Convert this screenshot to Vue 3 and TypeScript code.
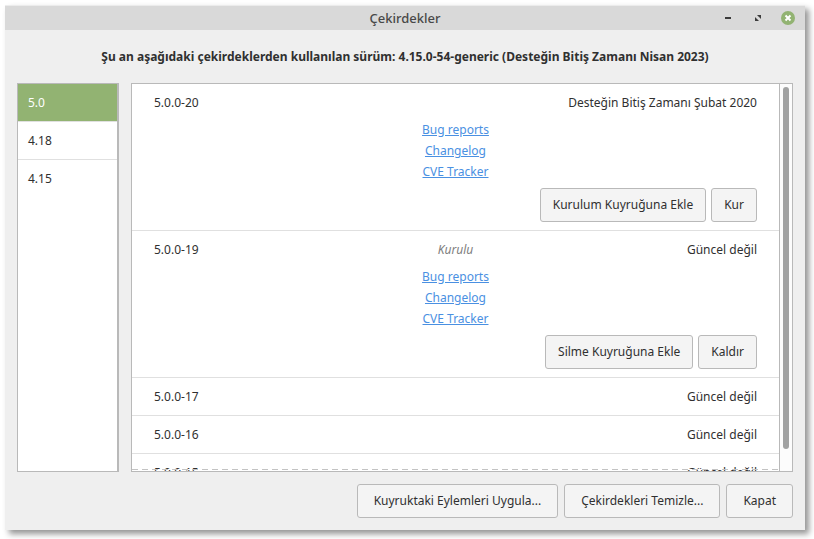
<script setup lang="ts">
import { ref } from 'vue'

interface Kernel {
  version: string
  status: string
  installed?: boolean
  queueLabel?: string
  actionLabel?: string
}

const series = ['5.0', '4.18', '4.15']
const selected = ref('5.0')
const links = ['Bug reports', 'Changelog', 'CVE Tracker']

const kernels: Kernel[] = [
  { version: '5.0.0-20', status: 'Desteğin Bitiş Zamanı Şubat 2020', queueLabel: 'Kurulum Kuyruğuna Ekle', actionLabel: 'Kur' },
  { version: '5.0.0-19', status: 'Güncel değil', installed: true, queueLabel: 'Silme Kuyruğuna Ekle', actionLabel: 'Kaldır' },
  { version: '5.0.0-17', status: 'Güncel değil' },
  { version: '5.0.0-16', status: 'Güncel değil' },
  { version: '5.0.0-15', status: 'Güncel değil' },
]
</script>

<template>
  <div class="desktop">
    <main class="window">
      <header class="titlebar">
        <h1>Çekirdekler</h1>
        <div class="controls">
          <button type="button" aria-label="Simge durumuna küçült">
            <svg width="14" height="14" viewBox="0 0 14 14"><rect x="4" y="6" width="6" height="2" fill="#3c3c3c" /></svg>
          </button>
          <button type="button" aria-label="Büyüt">
            <svg width="14" height="14" viewBox="0 0 14 14" fill="#3c3c3c">
              <path d="M6 4h4v4L8.800 6.800 7.200 5.200z" />
              <path d="M4 6v4h4L6.800 8.800 5.200 7.200z" />
            </svg>
          </button>
          <button type="button" aria-label="Kapat">
            <svg width="14" height="14" viewBox="0 0 14 14">
              <circle cx="7" cy="7" r="7" fill="#92b372" />
              <path d="M4.500 4.500l5 5m0-5l-5 5" stroke="#fff" stroke-width="2" />
            </svg>
          </button>
        </div>
      </header>

      <p class="current">Şu an aşağıdaki çekirdeklerden kullanılan sürüm: 4.15.0-54-generic (Desteğin Bitiş Zamanı Nisan 2023)</p>

      <div class="panels">
        <nav class="series">
          <button
            v-for="s in series"
            :key="s"
            type="button"
            :class="{ active: s === selected }"
            @click="selected = s"
          >{{ s }}</button>
        </nav>

        <section class="browser">
          <ul class="kernels">
            <li v-for="k in kernels" :key="k.version">
              <div class="summary">
                <span>{{ k.version }}</span>
                <em v-if="k.installed">Kurulu</em>
                <span class="status">{{ k.status }}</span>
              </div>
              <template v-if="k.actionLabel">
                <div class="links">
                  <a v-for="l in links" :key="l" href="#">{{ l }}</a>
                </div>
                <div class="actions">
                  <button type="button" class="btn">{{ k.queueLabel }}</button>
                  <button type="button" class="btn">{{ k.actionLabel }}</button>
                </div>
              </template>
            </li>
          </ul>
          <div class="track"><div class="thumb"></div></div>
        </section>
      </div>

      <footer class="footer">
        <button type="button" class="btn">Kuyruktaki Eylemleri Uygula...</button>
        <button type="button" class="btn">Çekirdekleri Temizle...</button>
        <button type="button" class="btn">Kapat</button>
      </footer>
    </main>
  </div>
</template>

<style>
body {
  margin: 0;
  background: #fff;
}
</style>

<style scoped>
.desktop {
  box-sizing: border-box;
  height: 100vh;
  padding: 5px 9px 9px 5px;
  font: 12px/21px "Noto Sans", sans-serif;
  color: #303030;
}
.desktop * {
  box-sizing: border-box;
}
button {
  font: inherit;
  color: inherit;
  margin: 0;
}
.window {
  display: flex;
  flex-direction: column;
  height: 100%;
  background: #efefef;
  box-shadow: 4px 4px 6px rgba(0, 0, 0, 0.42);
}
.titlebar {
  display: grid;
  grid-template-columns: 1fr auto 1fr;
  align-items: center;
  height: 25px;
  flex: none;
  padding: 0 10px;
  background: #d9d9d9;
  border-top: 1px solid #ececec;
}
h1 {
  grid-column: 2;
  margin: 0;
  font-size: 13px;
  font-weight: 500;
  color: #484848;
}
.controls {
  display: flex;
  justify-content: flex-end;
  gap: 16px;
}
.controls button {
  display: flex;
  padding: 0;
  border: 0;
  background: none;
}
.current {
  margin: 16px 12px;
  text-align: center;
  font-weight: 700;
}
.panels {
  display: flex;
  flex: 1;
  min-height: 0;
  gap: 12px;
  padding: 0 12px;
}
.series {
  display: flex;
  flex-direction: column;
  flex: none;
  width: 102px;
  background: #fff;
  border: 1px solid #b9b9b9;
  border-right-width: 2px;
}
.series button {
  padding: 8px 10px;
  border: 0;
  border-bottom: 1px solid #e0e0e0;
  background: none;
  text-align: left;
}
.series button:last-child {
  border-bottom: 0;
}
.series .active {
  background: #92b372;
  color: #fff;
}
.browser {
  position: relative;
  display: flex;
  flex: 1;
  min-width: 0;
  background: #fff;
  border: 1px solid #b9b9b9;
}
.browser::after {
  content: "";
  position: absolute;
  left: 0;
  right: 13px;
  bottom: 1px;
  height: 1px;
  background: repeating-linear-gradient(90deg, #c3c3c3 0 6px, #fff 6px 10px);
}
.kernels {
  flex: 1;
  min-width: 0;
  margin: 0;
  padding: 0;
  list-style: none;
  overflow: hidden;
}
li {
  padding: 8px 22px;
  border-bottom: 1px solid #e0e0e0;
}
.summary {
  display: grid;
  grid-template-columns: 1fr auto 1fr;
}
em {
  color: #808080;
}
.status {
  grid-column: 3;
  text-align: right;
}
.links {
  display: flex;
  flex-direction: column;
  align-items: center;
  margin: 6px 0;
}
a {
  color: #4a90e2;
}
.actions,
.footer {
  display: flex;
  justify-content: flex-end;
}
.actions {
  gap: 5px;
}
.btn {
  height: 34px;
  padding: 0 12px 2px;
  border: 1px solid #b9b9b9;
  border-radius: 3px;
  background: #f4f4f4;
}
.footer {
  flex: none;
  gap: 6px;
  padding: 12px;
}
.footer .btn {
  padding: 0 16px 2px;
}
.track {
  flex: none;
  width: 13px;
  padding: 3px;
  border-left: 1px solid #b9b9b9;
  background: #fcfcfc;
}
.thumb {
  width: 6px;
  height: 95%;
  border-radius: 3px;
  background: #a1a2a2;
}
</style>
